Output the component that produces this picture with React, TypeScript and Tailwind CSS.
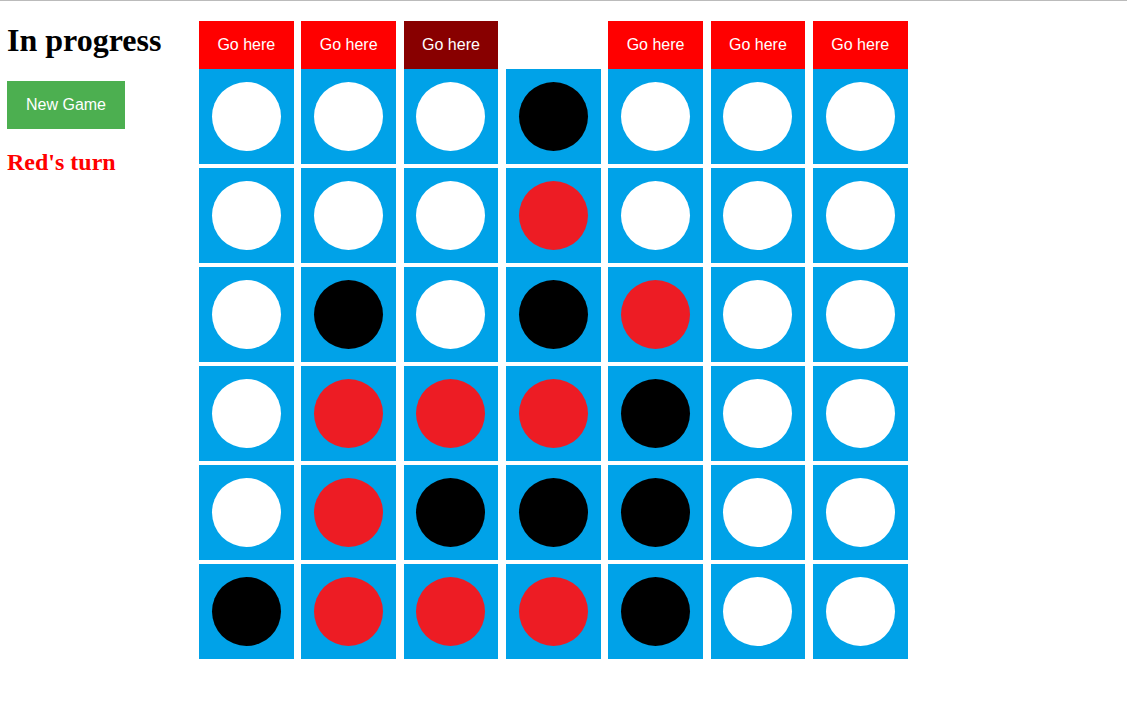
const board = [
  'WWWBWWW',
  'WWWRWWW',
  'WBWBRWW',
  'WRRRBWW',
  'WRBBBWW',
  'BRRRBWW',
]

const headers = ['red', 'red', 'dark', 'none', 'red', 'red', 'red']

const discColor: Record<string, string> = {
  W: 'bg-white',
  R: 'bg-[#ed1c24]',
  B: 'bg-black',
}

export default function App() {
  return (
    <div className="min-h-[707px] w-full border-t border-[#bbbbbb] bg-white">
      <div className="flex">
        {/* Sidebar */}
        <div className="w-[199px] shrink-0 pl-[7px]">
          <h1 className="mt-[21px] font-['Liberation_Serif',serif] text-[32px] font-bold leading-[37px] text-black">
            In progress
          </h1>
          <button className="mt-[22px] h-[48px] w-[118px] bg-[#4caf50] font-['Liberation_Sans',Arial,sans-serif] text-[16px] text-white">
            New Game
          </button>
          <h2 className="mt-[19px] font-['Liberation_Serif',serif] text-[24px] font-bold leading-[28px] text-[#ff0000]">
            Red&apos;s turn
          </h2>
        </div>

        {/* Board */}
        <div className="mt-[20px]">
          <div className="grid grid-cols-[repeat(7,94.67px)] gap-x-[7.67px]">
            {headers.map((h, i) =>
              h === 'none' ? (
                <div key={i} className="h-[48px]" />
              ) : (
                <button
                  key={i}
                  className={`flex h-[48px] items-center justify-center font-['Liberation_Sans',Arial,sans-serif] text-[16px] text-white ${
                    h === 'dark' ? 'bg-[#880000]' : 'bg-[#ff0000]'
                  }`}
                >
                  Go here
                </button>
              ),
            )}
          </div>
          <div className="grid grid-cols-[repeat(7,94.67px)] gap-x-[7.67px] gap-y-[4px]">
            {board.map((row, r) =>
              row.split('').map((c, col) => (
                <div key={`${r}-${col}`} className="flex h-[95px] items-center justify-center bg-[#00a2e8]">
                  <div className={`h-[69px] w-[69px] rounded-full ${discColor[c]}`} />
                </div>
              )),
            )}
          </div>
        </div>
      </div>
    </div>
  )
}
